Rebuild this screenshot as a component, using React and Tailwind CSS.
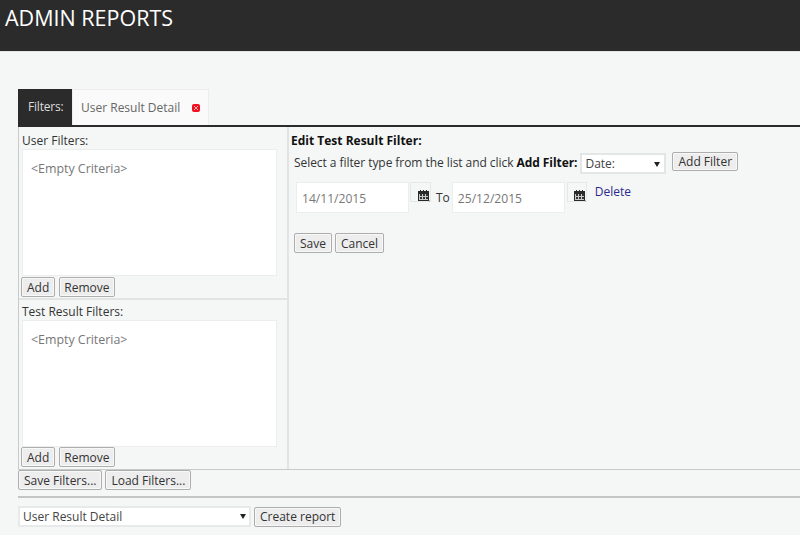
import React from 'react'

function Btn({ children, short, className = '' }) {
  return (
    <button className={(short ? "h-[19px] " : "h-[20px] ") + "text-[12px] leading-[15px] text-[#333] bg-[#ededed] border border-[#adadad] rounded-[2px] shadow-[inset_0_0_0_1px_#f8f8f8] whitespace-nowrap " + className}>
      {children}
    </button>
  )
}

function CalendarIcon() {
  return (
    <svg width="13" height="13" viewBox="0 0 13 13" className="shrink-0">
      <rect x="1" y="2" width="11" height="10" fill="#2a2a2a" />
      <rect x="3" y="1" width="1" height="2" fill="#2a2a2a" />
      <rect x="6" y="1" width="1" height="2" fill="#2a2a2a" />
      <rect x="9" y="1" width="1" height="2" fill="#2a2a2a" />
      <rect x="2" y="5" width="9" height="6" fill="#c8c8c8" />
      <path d="M3 5h2v2H3zM6 5h2v2H6zM9 5h2v2H9zM3 8h2v2H3zM6 8h2v2H6zM9 8h2v2H9z" fill="#333" />
      <rect x="12" y="11" width="1" height="2" fill="#bbb" />
    </svg>
  )
}

function Cal({ className = '' }) {
  return (
    <div className={"h-[20px] border border-[#e6e8e8] flex items-end justify-end " + className}>
      <div className="translate-y-[1px]"><CalendarIcon /></div>
    </div>
  )
}

function FilterBox({ label, labelClass, gapClass }) {
  return (
    <div>
      <div className={"pl-[3px] text-[12px] leading-[16px] text-[#333] " + labelClass}>{label}</div>
      <div className="ml-[3px] w-[255px] h-[127px] bg-white border border-[#eceeee] pl-[8px] pt-[10px] text-[12.4px] leading-[18px] text-[#777]">
        &lt;Empty Criteria&gt;
      </div>
      <div className={"flex gap-[4px] ml-[2px] " + gapClass}>
        <Btn className="px-[5px]">Add</Btn>
        <Btn className="px-[4px]">Remove</Btn>
      </div>
    </div>
  )
}

export default function App() {
  return (
    <div className="w-[800px] h-[535px] overflow-hidden bg-[#f5f7f7] font-['Open_Sans',sans-serif] text-[12px]">
      <div className="h-[51px] bg-[#2b2b2b] pl-[5px] pt-[2px] text-[21.5px] leading-[32px] text-white">ADMIN REPORTS</div>
      <div className="h-px bg-[#e2e4e4]" />

      <div className="pl-[18px] pt-[37px]">
        <div className="flex h-[36px]">
          <div className="w-[54px] bg-[#2b2b2b] text-[#ddd] pl-[10px] pt-[9px] leading-[17px] tracking-[-0.2px]">Filters:</div>
          <div className="w-[137px] bg-[#fafafa] border border-b-0 border-[#eceeee] flex items-start pl-[8px] pt-[9px] leading-[17px] text-[#666]">
            User Result Detail
            <span className="ml-[12px] mt-[5px] w-[8px] h-[8px] bg-[#f01020] rounded-[2px] flex items-center justify-center">
              <svg width="6" height="6" viewBox="0 0 6 6"><path d="M1 1l4 4M5 1L1 5" stroke="#ffb0b0" strokeWidth="1" /></svg>
            </span>
          </div>
        </div>
        <div className="h-[2px] bg-[#2b2b2b]" />

        <div className="flex h-[342px] border-l border-[#c8caca]">
          <div className="w-[270px] border-r-2 border-[#e2e4e4]">
            <FilterBox label="User Filters:" labelClass="pt-[6px]" gapClass="mt-px" />
            <div className="h-[2px] mt-px bg-[#e2e4e4]" />
            <FilterBox label="Test Result Filters:" labelClass="pt-[4px]" gapClass="mt-0" />
          </div>
          <div className="flex-1 pl-[2px] pt-[6px] text-[#333]">
            <div className="font-bold text-[#111] leading-[16px]">Edit Test Result Filter:</div>
            <div className="flex items-start pl-[3px] mt-[4px] h-[22px]">
              <span className="mt-[2px] leading-[16px] tracking-[-0.06px]">Select a filter type from the list and click <b className="text-[#111]">Add Filter:</b></span>
              <div className="ml-[3px] w-[86px] h-[21px] bg-white border-2 border-[#e4e6e6] flex items-center justify-between pl-[3px] pr-[4px] pt-px text-[#444]">
                Date:
                <span className="w-0 h-0 border-x-[3px] border-x-transparent border-t-[5px] border-t-[#222]" />
              </div>
              <Btn short className="ml-[6px] -mt-px px-[5px]">Add Filter</Btn>
            </div>
            <div className="flex items-start pl-[5px] mt-[7px] h-[31px]">
              <div className="w-[113px] h-[31px] bg-white border border-[#eceeee] pl-[5px] pt-[7px] text-[12.1px] text-[#777] leading-[18px]">14/11/2015</div>
              <Cal className="ml-px w-[21px]" />
              <span className="ml-[5px] mt-[7px] leading-[18px]">To</span>
              <div className="ml-[2px] w-[113px] h-[31px] bg-white border border-[#eceeee] pl-[5px] pt-[7px] text-[12.1px] text-[#777] leading-[18px]">25/12/2015</div>
              <Cal className="ml-[2px] w-[20px]" />
              <a className="ml-[8px] mt-px leading-[17px] text-[#2a2a8c]">Delete</a>
            </div>
            <div className="flex gap-[3px] pl-[3px] mt-[20px]">
              <Btn className="px-[5px]">Save</Btn>
              <Btn className="px-[5px]">Cancel</Btn>
            </div>
          </div>
        </div>

        <div className="h-px bg-[#c8caca]" />
        <div className="flex gap-[3px]">
          <Btn className="px-[5px]">Save Filters...</Btn>
          <Btn className="px-[5px]">Load Filters...</Btn>
        </div>
        <div className="h-[2px] mt-[6px] bg-[#c4c6c6]" />
        <div className="flex items-center mt-[8px]">
          <div className="w-[233px] h-[21px] bg-white border-2 border-[#e8eaea] flex items-center justify-between pl-[3px] pr-[3px] text-[#444]">
            User Result Detail
            <span className="w-0 h-0 border-x-[3px] border-x-transparent border-t-[5px] border-t-[#222]" />
          </div>
          <Btn className="ml-[3px] px-[5px]">Create report</Btn>
        </div>
      </div>
    </div>
  )
}
